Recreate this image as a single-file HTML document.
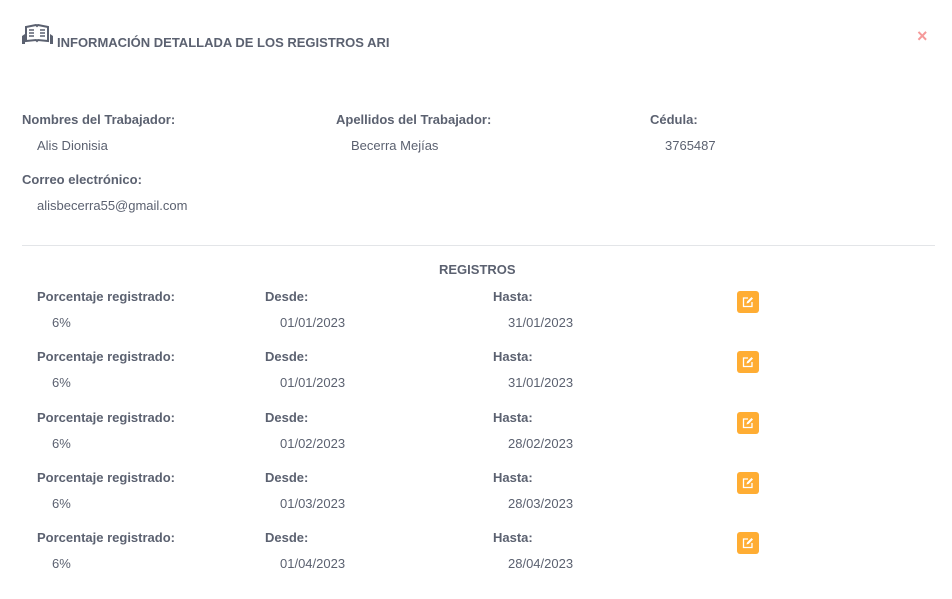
<!DOCTYPE html><html><head><meta charset="utf-8"><style>
body{margin:0;width:952px;height:599px;background:#fff;font-family:"Liberation Sans",sans-serif;color:#5b6170;position:relative;overflow:hidden}
.a{position:absolute;font-size:13px;white-space:nowrap}
.b{font-weight:bold}
.e{position:absolute;width:22px;height:22px;background:#ffad33;border-radius:3px}
.e svg{position:absolute;left:5px;top:5px}
</style></head><body>
<svg style="position:absolute;left:21px;top:24px" width="33" height="22" viewBox="0 0 33 22"><path d="M5 3 L15 1 L16 2 L17 1 L27 3 L27 17 L17 16 L16 17 L15 16 L5 17Z" fill="none" stroke="#5b6170" stroke-width="2"/><path d="M8 6h5M8 9h5M8 12h5M19 6h5M19 9h5M19 12h5" stroke="#5b6170" stroke-width="1.5"/><path d="M1 12 L4 10 L4 20 L1 20Z M32 12 L29 10 L29 20 L32 20Z" fill="#5b6170"/></svg>
<div class="a b" style="left:57px;top:35px">INFORMACIÓN DETALLADA DE LOS REGISTROS ARI</div>
<div class="a" style="left:917px;top:26px;font-size:18px;color:#f59a9a;font-weight:bold">×</div>
<div class="a b" style="left:22px;top:112px">Nombres del Trabajador:</div>
<div class="a" style="left:37px;top:138px">Alis Dionisia</div>
<div class="a b" style="left:336px;top:112px">Apellidos del Trabajador:</div>
<div class="a" style="left:351px;top:138px">Becerra Mejías</div>
<div class="a b" style="left:650px;top:112px">Cédula:</div>
<div class="a" style="left:665px;top:138px">3765487</div>
<div class="a b" style="left:22px;top:172px">Correo electrónico:</div>
<div class="a" style="left:37px;top:198px">alisbecerra55@gmail.com</div>
<div style="position:absolute;left:22px;top:245px;width:913px;height:1px;background:#e3e5e8"></div>
<div class="a b" style="left:439px;top:262px">REGISTROS</div>
<div id="r"></div>
<script>
var d=[["01/01/2023","31/01/2023"],["01/01/2023","31/01/2023"],["01/02/2023","28/02/2023"],["01/03/2023","28/03/2023"],["01/04/2023","28/04/2023"]];
var h="";d.forEach(function(x,i){var y=289+i*60.3;
h+='<div class="a b" style="left:37px;top:'+y+'px">Porcentaje registrado:</div><div class="a" style="left:52px;top:'+(y+26)+'px">6%</div>';
h+='<div class="a b" style="left:265px;top:'+y+'px">Desde:</div><div class="a" style="left:280px;top:'+(y+26)+'px">'+x[0]+'</div>';
h+='<div class="a b" style="left:493px;top:'+y+'px">Hasta:</div><div class="a" style="left:508px;top:'+(y+26)+'px">'+x[1]+'</div>';
h+='<div class="e" style="left:737px;top:'+(y+2)+'px"><svg width="12" height="12" viewBox="0 0 12 12"><path d="M6 2H1.5V10.5H10V6" fill="none" stroke="#fff" stroke-width="1.3"/><path d="M4.5 7.5L5 5.5L9.5 1L11 2.5L6.5 7Z" fill="#fff"/></svg></div>';});
document.getElementById("r").innerHTML=h;
</script>
</body></html>
